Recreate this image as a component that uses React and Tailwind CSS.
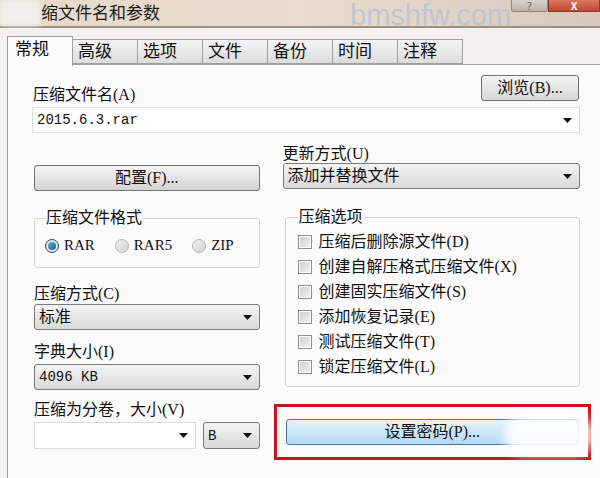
import React from 'react';

const cjk = { fontFamily: '"Liberation Serif","Noto Sans CJK SC",serif' };
const mono = { fontFamily: '"Liberation Mono","Noto Sans CJK SC",monospace' };

const Arrow = () => (
  <svg width="9" height="5" viewBox="0 0 9 5" className="shrink-0">
    <path d="M0 0 H9 L4.5 5 Z" fill="#111" />
  </svg>
);

const Combo = ({ value, editable, className = '', valueStyle = cjk, size = 'text-[16px]' }) => (
  <div
    className={
      'flex h-[26px] items-center justify-between pl-[4px] pr-[7px] ' +
      (editable
        ? 'border border-[#dcdcdc] bg-white '
        : 'rounded-[3px] border border-[#7a7a7a] bg-gradient-to-b from-[#f4f4f4] to-[#d9d9d9] ') +
      className
    }
  >
    <span className={size + ' leading-none text-[#111]'} style={valueStyle}>
      {value}
    </span>
    <Arrow />
  </div>
);

const Radio = ({ checked, label }) => (
  <div className="flex items-center gap-[5px]">
    <div
      className={
        'flex h-[14px] w-[14px] items-center justify-center rounded-full border ' +
        (checked ? 'border-[#2b4a66] bg-[#dfe8ef]' : 'border-[#b4b4b4] bg-gradient-to-br from-[#f0f0f0] to-[#d4d4d4]')
      }
    >
      {checked && <div className="h-[8px] w-[8px] rounded-full bg-gradient-to-br from-[#5fb0e0] to-[#1b5f8f]" />}
    </div>
    <span className="text-[15px] leading-none text-[#111]" style={cjk}>
      {label}
    </span>
  </div>
);

const Check = ({ label }) => (
  <div className="flex h-[25px] items-center gap-[7px]">
    <div className="flex h-[14px] w-[14px] items-center justify-center border border-[#8f8f8f] bg-white">
      <div className="h-[10px] w-[10px] bg-gradient-to-br from-[#d0d0d0] to-[#f2f2f2]" />
    </div>
    <span className="text-[16px] leading-none text-[#111]" style={cjk}>
      {label}
    </span>
  </div>
);

const Label = ({ children, className = '' }) => (
  <div className={'text-[16px] leading-[16px] text-[#111] ' + className} style={cjk}>
    {children}
  </div>
);

const tabs = ['常规', '高级', '选项', '文件', '备份', '时间', '注释'];

export default function App() {
  return (
    <div className="relative h-[478px] w-[600px] overflow-hidden bg-[#f3f2f1]">
      {/* title bar */}
      <div className="relative flex h-[28px] items-center border-b-2 border-[#a08e80] bg-gradient-to-r from-[#ead8c6] via-[#e8dccf] to-[#d9c8bb]">
        <div className="h-full w-[40px] bg-[#f1eeec] blur-[2px]" />
        <span className="ml-[1px] text-[17px] leading-none text-[#1a1a1a]" style={cjk}>
          缩文件名和参数
        </span>
        <div className="absolute right-[52px] top-0 flex h-[12px] w-[37px] items-end justify-center rounded-b-[3px] border border-t-0 border-[#8f837b] bg-gradient-to-b from-[#d8d0ca] to-[#bdb3ac] text-[10px] leading-none text-[#555]">
          ?
        </div>
        <div className="absolute right-0 top-0 flex h-[12px] w-[52px] items-end justify-center border border-t-0 border-[#8a3a2a] bg-gradient-to-b from-[#d9775e] to-[#c0452c] text-[10px] font-bold leading-none text-white">
          X
        </div>
      </div>

      {/* watermark over the title bar */}
      <span
        className="absolute left-[350px] top-0 z-20 text-[29px] leading-[30px] text-[#b9c5d3]/90"
        style={{ fontFamily: '"Liberation Sans",sans-serif' }}
      >
        bmshfw.com
      </span>

      {/* tabs */}
      <div className="mt-[9px] flex h-[27px] items-end pl-[7px]">
        {tabs.map((t, i) =>
          i === 0 ? (
            <div
              key={t}
              className="relative z-10 -mb-[2px] flex h-[30px] w-[66px] items-start border border-b-0 border-[#a0a0a0] bg-[#fbfbfb] pl-[7px] pt-[3px] text-[17px] leading-[20px] text-[#111]"
              style={cjk}
            >
              {t}
            </div>
          ) : (
            <div
              key={t}
              className="flex h-[25px] w-[65px] items-center border border-l-0 border-[#a0a0a0] bg-gradient-to-b from-[#f5f5f5] to-[#dcdcdc] pl-[5px] text-[17px] leading-none text-[#111]"
              style={cjk}
            >
              {t}
            </div>
          )
        )}
      </div>

      {/* panel */}
      <div className="ml-[7px] h-[420px] border-l border-t border-[#a0a0a0] bg-[#fbfbfb] pl-[24px] pr-[20px]">
        <div className="mt-[10px] flex items-end justify-between pr-[1px]">
          <Label className="mb-[-2px] ml-[1px]">压缩文件名(A)</Label>
          <div
            className="flex h-[26px] w-[98px] items-center justify-center rounded-[3px] border border-[#707070] bg-gradient-to-b from-[#f4f4f4] to-[#d6d6d6] text-[16px] leading-none text-[#111]"
            style={cjk}
          >
            浏览(B)...
          </div>
        </div>
        <Combo value="2015.6.3.rar" editable className="mt-[6px]" valueStyle={mono} size="text-[14px]" />

        <div className="mt-[13px] flex gap-[23px]">
          {/* left column */}
          <div className="flex w-[228px] flex-col pl-[2px]">
            <div className="h-[19px]" />
            <div
              className="flex h-[26px] items-center justify-center rounded-[3px] border border-[#707070] bg-gradient-to-b from-[#f4f4f4] to-[#d4d4d4] text-[16px] leading-none text-[#111]"
              style={cjk}
            >
              配置(F)...
            </div>
            <fieldset className="mt-[19px] h-[58px] rounded-[3px] border border-[#d6d6d6] px-[10px]">
              <legend className="px-[1px] text-[16px] leading-[16px] text-[#111]" style={cjk}>
                压缩文件格式
              </legend>
              <div className="mt-[12px] flex gap-[20px]">
                <Radio checked label="RAR" />
                <Radio label="RAR5" />
                <Radio label="ZIP" />
              </div>
            </fieldset>
            <Label className="mt-[18px]">压缩方式(C)</Label>
            <Combo value="标准" className="mt-[2px]" />
            <Label className="mt-[14px]">字典大小(I)</Label>
            <Combo value="4096 KB" className="mt-[4px]" valueStyle={mono} size="text-[14px]" />
            <Label className="mt-[12px]">压缩为分卷，大小(V)</Label>
            <div className="mt-[4px] flex gap-[7px]">
              <Combo value="" editable className="h-[27px] w-[162px]" />
              <Combo value="B" className="h-[27px] flex-1" valueStyle={mono} size="text-[14px]" />
            </div>
          </div>

          {/* right column */}
          <div className="flex w-[298px] flex-col">
            <Label>更新方式(U)</Label>
            <Combo value="添加并替换文件" className="mt-[1px]" />
            <fieldset className="ml-[2px] mt-[20px] h-[178px] rounded-[3px] border border-[#d6d6d6] px-[12px]">
              <legend className="px-[1px] text-[16px] leading-[16px] text-[#111]" style={cjk}>
                压缩选项
              </legend>
              <div className="mt-[4px] flex flex-col">
                <Check label="压缩后删除源文件(D)" />
                <Check label="创建自解压格式压缩文件(X)" />
                <Check label="创建固实压缩文件(S)" />
                <Check label="添加恢复记录(E)" />
                <Check label="测试压缩文件(T)" />
                <Check label="锁定压缩文件(L)" />
              </div>
            </fieldset>
            <div className="relative -ml-[9px] -mr-[11px] mt-[17px] h-[56px] border-[3px] border-[#c8141e] px-[9px] pt-[12px]">
              <div
                className="flex h-[26px] items-center justify-center rounded-[3px] border border-[#3e79a8] bg-gradient-to-b from-[#e6f3fb] to-[#b3d9f1] text-[16px] leading-none text-[#111]"
                style={cjk}
              >
                设置密码(P)...
              </div>
              <div className="absolute right-[-6px] top-[8px] h-[40px] w-[90px] rounded-full bg-white/90 blur-[5px]" />
            </div>
          </div>
        </div>
      </div>
    </div>
  );
}
